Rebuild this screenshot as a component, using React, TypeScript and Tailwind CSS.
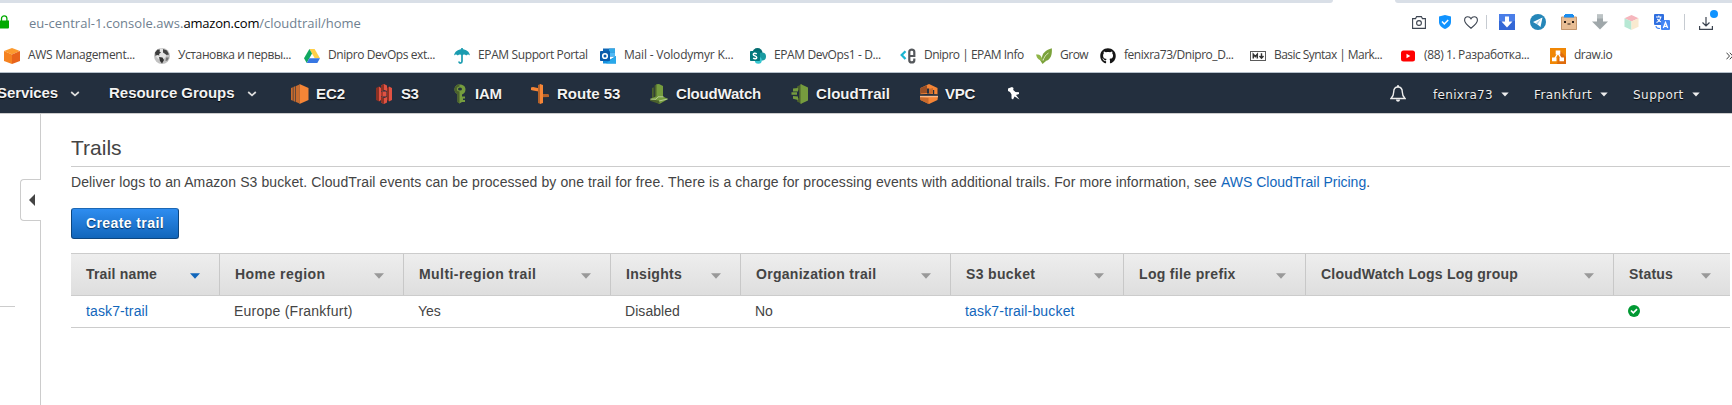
import type { ReactNode } from "react";
import { FaGithub } from "react-icons/fa";

const Svg = ({ children, className = "h-4 w-4" }: { children: ReactNode; className?: string }) => (
  <svg viewBox="0 0 16 16" className={className + " shrink-0"} fill="none">{children}</svg>
);

/* ---------- bookmark icons ---------- */
const AwsCube = () => (
  <Svg>
    <path d="M8 0l8 3-8 3.5L0 3z" fill="#fc9a2e" />
    <path d="M0 3l8 3.5V16l-8-3z" fill="#f58220" />
    <path d="M16 3L8 6.5V16l8-3z" fill="#e8641b" />
  </Svg>
);
const Globe = () => (
  <Svg>
    <circle cx="8" cy="8" r="8" fill="#c2c2c2" />
    <circle cx="7" cy="6" r="5.5" fill="#e4e4e4" />
    <path d="M1 4.500l2.500-3L6 1.500l-.5 2 1.500 1-2 1.500.5 1.500L3 7 1.500 8z" fill="#3c3c3c" />
    <path d="M9 1l4 1.500 2 4-2.500.5-2-1.500-1.500-1z" fill="#444" />
    <path d="M5 9l3.500.5 1.500 2.500L8 15.500 6 13z" fill="#333" />
    <path d="M12 9.500l3 0-1.500 3-2 .5z" fill="#777" />
  </Svg>
);
const Drive = () => (
  <Svg>
    <path d="M5.400 1h5.200L16 10.300h-5.300z" fill="#ffcf48" />
    <path d="M5.400 1L0 10.300 2.700 15 8 5.600z" fill="#11a861" />
    <path d="M5.300 10.300H16L13.300 15H2.700z" fill="#3777e3" />
  </Svg>
);
const Umbrella = () => (
  <Svg>
    <path d="M0 7.500C.5 3.500 4 1.200 8 1.200s7.500 2.300 8 6.300c-1.300-1.200-2.600-1.200-3.800 0-1.200-1.200-2.900-1.200-4.200 0-1.300-1.200-3-1.200-4.200 0C2.600 6.300 1.300 6.300 0 7.500z" fill="#1a9cb0" />
    <path d="M8 0v13.200c0 2.400-3 2.400-3 .2" stroke="#1a9cb0" strokeWidth="1.700" />
  </Svg>
);
const Outlook = () => (
  <Svg>
    <path d="M3 .5h12v8H3z" fill="#1066b5" />
    <path d="M9 .5h6v4H9z" fill="#32a9e7" />
    <path d="M9 4.500h6v4H9z" fill="#50b9f5" />
    <path d="M3 8l7 3.500L16 8v7.500H3z" fill="#1490df" />
    <path d="M16 8v7.500H6z" fill="#28a8ea" />
    <rect y="3" width="10" height="10" rx=".8" fill="#0a5cab" />
    <circle cx="5" cy="8" r="2.300" stroke="#fff" strokeWidth="1.600" />
  </Svg>
);
const SharePoint = () => (
  <Svg>
    <circle cx="7.500" cy="5" r="5" fill="#036c70" />
    <circle cx="12" cy="8.500" r="4" fill="#1a9ba1" />
    <circle cx="8.300" cy="12.300" r="3.500" fill="#37c6d0" />
    <rect y="3" width="10" height="10" rx=".8" fill="#03787c" />
    <path d="M6.800 5.800C5 4.800 3.300 5.200 3.300 6.500c0 1.600 3.400 1.200 3.400 2.900 0 1.500-2 1.800-3.600.8" stroke="#fff" strokeWidth="1.500" />
  </Svg>
);
const Epam = () => (
  <Svg>
    <path d="M5.500 3.200L1.700 7 5.500 11" stroke="#1bb5d1" strokeWidth="2.300" />
    <path d="M9.500 8h4.800V3.800c0-3-5-3-5 0v8.400c0 3 5 3 5 0v-1.700" stroke="#55585c" strokeWidth="2.200" />
  </Svg>
);
const Leaf = () => (
  <Svg>
    <path d="M15.800.3c.5 7-1.300 12.600-8.800 13C3.800 8 8.500 2.200 15.800.3z" fill="#7ba23b" />
    <path d="M0 6.500c4-.3 6 1.500 6.500 6.500C3 12.500.8 10.500 0 6.500z" fill="#8fb548" />
    <path d="M7 13c1-4 3-6.500 5.500-8" stroke="#d5e4b8" strokeWidth="1" />
    <path d="M4 12l2.500 4L10 13z" fill="#7ba23b" />
  </Svg>
);
const Markdown = () => (
  <Svg>
    <rect x=".5" y="3.500" width="15" height="9" fill="#fff" stroke="#5a5a5a" />
    <path d="M3.300 10.500V6.200L5.300 8.500l2-2.300v4.300" stroke="#333" strokeWidth="1.500" />
    <path d="M11.500 5.300v4.500M9.500 8l2 2.300 2-2.300" stroke="#333" strokeWidth="1.400" />
  </Svg>
);
const YouTube = () => (
  <Svg>
    <rect x="1" y="2.500" width="14" height="11" rx="2.500" fill="#f00" />
    <path d="M6.500 5.800v4.400L10.300 8z" fill="#fff" />
  </Svg>
);
const DrawIo = () => (
  <Svg>
    <rect width="16" height="16" fill="#f08705" />
    <path d="M10 3l6 6v7H7z" fill="#df6c0c" />
    <path d="M8 5L4.500 11M8 5l3.500 6" stroke="#fff" strokeWidth="1.400" />
    <path d="M5.700 2.500h4.600v4H5.700zM2 9.500h4.500v3.800H2zM9.500 9.500H14v3.800H9.500z" fill="#fff" />
  </Svg>
);

const bookmarks: { icon: ReactNode; text: string; w: string; t: string }[] = [
  { icon: <AwsCube />, text: "AWS Management...", w: "w-[150px]", t: "tracking-[-0.3px]" },
  { icon: <Globe />, text: "Установка и первы...", w: "w-[150px]", t: "tracking-[-0.4px]" },
  { icon: <Drive />, text: "Dnipro DevOps ext...", w: "w-[150px]", t: "tracking-[-0.42px]" },
  { icon: <Umbrella />, text: "EPAM Support Portal", w: "w-[146px]", t: "tracking-[-0.38px]" },
  { icon: <Outlook />, text: "Mail - Volodymyr K...", w: "w-[150px]", t: "tracking-[-0.19px]" },
  { icon: <SharePoint />, text: "EPAM DevOps1 - D...", w: "w-[150px]", t: "tracking-[-0.4px]" },
  { icon: <Epam />, text: "Dnipro | EPAM Info", w: "w-[136px]", t: "tracking-[-0.5px]" },
  { icon: <Leaf />, text: "Grow", w: "w-[64px]", t: "tracking-[-0.5px]" },
  { icon: <FaGithub className="h-4 w-4 shrink-0 text-[#161616]" />, text: "fenixra73/Dnipro_D...", w: "w-[150px]", t: "tracking-[-0.46px]" },
  { icon: <Markdown />, text: "Basic Syntax | Mark...", w: "w-[150px]", t: "tracking-[-0.55px]" },
  { icon: <YouTube />, text: "(88) 1. Разработка...", w: "w-[150px]", t: "tracking-[-0.37px]" },
  { icon: <DrawIo />, text: "draw.io", w: "w-[150px]", t: "tracking-[-0.5px]" },
];

/* ---------- service icons ---------- */
const Service = ({ children }: { children: ReactNode }) => (
  <svg viewBox="0 0 18 20" className="h-5 w-[18px] shrink-0">{children}</svg>
);
const Ec2 = () => (
  <Service>
    <path d="M0 4l1.800-.8v13.600L0 16zM2.400 3l2-1v16l-2-1zM5 2L8.500.5v19L5 18z" fill="#c96c2e" />
    <path d="M8.500 0L17.500 4v12l-9 4z" fill="#f58536" />
  </Service>
);
const S3 = () => (
  <Service>
    <path d="M1 4l3-1.500v15L1 16z" fill="#8c3123" />
    <path d="M4 2.500L6 4v12l-2 1.500z" fill="#e05243" />
    <path d="M17 4l-3-1.500v15l3-1.500z" fill="#e05243" />
    <path d="M14 2.500L12 4v12l2 1.500z" fill="#8c3123" />
    <path d="M9 0l3 1.500V7L9 6 6 7V1.500zM9 20l3-1.500V13l-3 1-3-1v5.500z" fill="#e05243" />
    <path d="M9 0L6 1.500V7l3-1zM9 20l-3-1.500V13l3 1z" fill="#8c3123" />
    <path d="M6.500 7.500h5v5h-5z" fill="#e05243" />
    <path d="M6 8h2v4H6z" fill="#a83a2c" />
  </Service>
);
const Iam = () => (
  <Service>
    <path d="M8.500.5C13 .5 14.500 3 14.500 5.500S13 10 11 10.500v2h3v2h-2v1.500h2v2h-3L8.500 19.500 6.500 18v-8C4.500 9 3.500 7.500 3.500 5.500c0-3 2-5 5-5z" fill="#759c3e" />
    <path d="M8.500.5c-3 0-5 2-5 5 0 2 1 3.500 3 4.500v8l2 1.500z" fill="#4b612c" />
    <ellipse cx="9" cy="5" rx="3.200" ry="2.500" fill="#759c3e" />
    <ellipse cx="9" cy="5" rx="2" ry="1.500" fill="#232f3e" />
  </Service>
);
const Route53 = () => (
  <Service>
    <path d="M0 3.500L2 3l7 1.500v3.300L2 6.500 0 6z" fill="#f58536" />
    <path d="M10 10h7l1 .8v2.200l-8 .3z" fill="#b5622a" />
    <path d="M7 1l2.500-1v20L7 19z" fill="#b5622a" />
    <path d="M9 0l3 1v18l-3 1z" fill="#f58536" />
  </Service>
);
const CloudWatch = () => (
  <Service>
    <path d="M2 4l1.800-.8V14L2 15zM4.600 1.500L7 0v13l-2.400 1z" fill="#4b612c" />
    <path d="M6.500.3L9 0l4 2v11H6.500z" fill="#759c3e" />
    <path d="M0 15l6-2.500h7l5 2.500-8.500 5z" fill="#759c3e" />
    <path d="M0 15l9.500 1.800V20L0 16.800z" fill="#4b612c" />
    <path d="M.5 15.200h5.500l2-2.400h5.500M9 17l8.500-2" stroke="#c5d7a8" strokeWidth=".8" fill="none" />
  </Service>
);
const CloudTrail = () => (
  <Service>
    <path d="M6 2.500l5-2.500v20l-5-2.500v-3l2-.5V6.500L6 6z" fill="#4b612c" />
    <path d="M9.500 0l7.500 3.500v13L9.500 20z" fill="#759c3e" />
    <path d="M2 4.500L7 4v3.500H2zM.5 8.300H6v2.400H.5zM2 12l5 .5V16l-5-1.200z" fill="#759c3e" />
  </Service>
);
const Vpc = () => (
  <Service>
    <path d="M9 0l8.500 4v6.500H.5V4z" fill="#f58536" />
    <path d="M.5 4L7 1.200V9L.5 9.500z" fill="#9d5025" />
    <path d="M7 4.500h2.200V9.500H7zM13 6h1.200v4H13z" fill="#232f3e" />
    <path d="M9.200 5L13 4v5.500H9.200z" fill="#c86a2d" />
    <path d="M.5 10.500L9 9.700l8.500.8v1.200H.5z" fill="#232f3e" />
    <path d="M0 12h18l-.5 4L9 20 .5 16z" fill="#f58536" />
    <path d="M.5 13l8 1v6L.5 16z" fill="#c86a2d" />
    <path d="M0 11.800h18v1.400H0z" fill="#f7b98c" />
  </Service>
);

const shadow = "[text-shadow:0_1px_1px_#000]";
const services: { icon: ReactNode; text: string; w: string; t: string; gap: string }[] = [
  { icon: <Ec2 />, text: "EC2", w: "w-[84px]", t: "tracking-normal", gap: "gap-[7px]" },
  { icon: <S3 />, text: "S3", w: "w-[76px]", t: "tracking-[-0.5px]", gap: "gap-2" },
  { icon: <Iam />, text: "IAM", w: "w-[80px]", t: "tracking-[-0.2px]", gap: "gap-[6px]" },
  { icon: <Route53 />, text: "Route 53", w: "w-[119px]", t: "tracking-normal", gap: "gap-2" },
  { icon: <CloudWatch />, text: "CloudWatch", w: "w-[141px]", t: "tracking-[-0.19px]", gap: "gap-2" },
  { icon: <CloudTrail />, text: "CloudTrail", w: "w-[129px]", t: "tracking-[0.07px]", gap: "gap-[7px]" },
  { icon: <Vpc />, text: "VPC", w: "w-[87px]", t: "tracking-[-0.25px]", gap: "gap-[7px]" },
];

const Chevron = () => (
  <svg viewBox="0 0 10 6" className="mt-[2px] h-[6px] w-[10px] shrink-0"><path d="M1.200 1l3.800 3.400L8.800 1" stroke="#ddd" strokeWidth="1.700" fill="none" /></svg>
);
const Caret = () => (
  <svg viewBox="0 0 8 5" className="h-[5px] w-2 shrink-0"><path d="M.3.500h7.400L4 4.500z" fill="#eee" /></svg>
);

/* ---------- table ---------- */
const columns: { name: string; w: string; t: string; active?: boolean }[] = [
  { name: "Trail name", w: "w-[149px] pl-[15px]", t: "tracking-[0.17px]", active: true },
  { name: "Home region", w: "w-[184px] pl-[15px]", t: "tracking-[0.45px]" },
  { name: "Multi-region trail", w: "w-[207px] pl-[15px]", t: "tracking-[0.43px]" },
  { name: "Insights", w: "w-[130px] pl-[15px]", t: "tracking-[0.3px]" },
  { name: "Organization trail", w: "w-[210px] pl-[15px]", t: "tracking-[0.29px]" },
  { name: "S3 bucket", w: "w-[173px] pl-[15px]", t: "tracking-[0.35px]" },
  { name: "Log file prefix", w: "w-[182px] pl-[15px]", t: "tracking-[0.33px]" },
  { name: "CloudWatch Logs Log group", w: "w-[308px] pl-[15px]", t: "tracking-[0.22px]" },
  { name: "Status", w: "w-[116px] pl-[15px]", t: "tracking-[0.2px]" },
];
const cells: { node: ReactNode; w: string }[] = [
  { node: <span className="tracking-[0.12px] text-[#1166bb]">task7-trail</span>, w: "w-[148px]" },
  { node: <span className="tracking-[0.24px]">Europe (Frankfurt)</span>, w: "w-[184px]" },
  { node: "Yes", w: "w-[207px]" },
  { node: <span className="tracking-[0.06px]">Disabled</span>, w: "w-[130px]" },
  { node: "No", w: "w-[210px]" },
  { node: <span className="tracking-[0.17px] text-[#1166bb]">task7-trail-bucket</span>, w: "w-[663px]" },
  {
    node: (
      <svg viewBox="0 0 12 12" className="mt-px h-3 w-3">
        <circle cx="6" cy="6" r="6" fill="#093" />
        <path d="M3 5.500l2.300 2.400L9 4.200" stroke="#fff" strokeWidth="1.700" fill="none" />
      </svg>
    ),
    w: "w-[100px]",
  },
];

export default function App() {
  return (
    <div className="h-[405px] w-[1732px] overflow-hidden bg-white font-['Liberation_Sans',sans-serif] text-[#444]">
      {/* tab strip edge */}
      <div className="flex h-[3px] justify-between">
        <div className="w-[1333px] rounded-br-[3px] bg-[#d9dfe7]" />
        <div className="w-[337px] rounded-bl-[3px] bg-[#d9dfe7]" />
      </div>

      {/* address bar */}
      <div className="flex h-[36px] items-center">
        <svg viewBox="0 0 10 14" className="mt-px h-[14px] w-[10px] shrink-0">
          <path d="M1.500 6V3.500a2.700 2.700 0 015.400 0V6" stroke="#0a0" strokeWidth="1.300" fill="none" />
          <path d="M0 5.500h9v7a1 1 0 01-1 1H0z" fill="#0a0" />
        </svg>
        <div className="ml-[19px] mt-[4px] w-[1383px] whitespace-nowrap font-['Open_Sans',sans-serif] text-[13px] leading-5 text-[#6f7f90]">
          <span className="tracking-[0.04px]">eu-central-1.console.aws.</span>
          <span className="tracking-[-0.2px] text-black">amazon.com</span>
          <span>/cloudtrail/home</span>
        </div>
        <div className="flex items-center pt-[2px]">
          <svg viewBox="0 0 14 13" className="mr-[13px] h-[13px] w-[14px]" fill="none" stroke="#3c4450" strokeWidth="1.100">
            <path d="M.6 2.600h3L4.600.6h4.800l1 2h3v9.800H.6z" />
            <circle cx="7" cy="7" r="2.400" />
          </svg>
          <svg viewBox="0 0 12 14" className="mr-[13px] h-[14px] w-3" fill="none">
            <path d="M6 0l6 1.500V7c0 3.500-2.500 5.500-6 7-3.500-1.500-6-3.500-6-7V1.500z" fill="#1093ff" />
            <path d="M3 6.500L5.300 9 9.200 5" stroke="#fff" strokeWidth="1.500" />
          </svg>
          <svg viewBox="0 0 14 13" className="h-[13px] w-[14px]" fill="none" stroke="#3c4450" strokeWidth="1.100">
            <path d="M7 12.200C3 9 .6 6.800.6 4.200.6 2 2 .7 3.800.7 5.200.7 6.400 1.500 7 2.800 7.600 1.500 8.800.7 10.200.7c1.800 0 3.200 1.300 3.200 3.500 0 2.600-2.400 4.800-6.400 8z" />
          </svg>
          <div className="ml-2 mr-3 h-[14px] w-px bg-[#c6cbd1]" />
          <Svg className="mr-[15px] h-4 w-4">
            <rect width="16" height="16" fill="#3367d6" />
            <path d="M0 0h16v7H0z" fill="#4a7ee8" />
            <path d="M6 2.500h4v5h3.500L8 13.500 2.500 7.500H6z" fill="#fff" />
          </Svg>
          <Svg className="mr-[15px] h-4 w-4">
            <circle cx="8" cy="8" r="8" fill="#2586b8" />
            <path d="M3 8l9.500-4.500L10.500 13 7.500 10.500z" fill="#fff" />
            <path d="M6 9l5-4-3.500 5.500z" fill="#a9d2e8" />
          </Svg>
          <Svg className="mr-[15px] h-4 w-4">
            <rect y="3" width="16" height="13" rx="1" fill="#e8bd94" />
            <path d="M.5 3h15M.5 3v12.500h15V3" stroke="#c4966d" />
            <path d="M4 0h8v1h1v2.500H3V1h1z" fill="#1a8df0" />
            <path d="M3 7h2v2H3zM11 7h2v2h-2zM6.500 9.500h3v1h-3z" fill="#2c2018" />
          </Svg>
          <Svg className="mr-4 h-4 w-4">
            <path d="M5 .5h6v7h5L8 15.500 0 7.500h5z" fill="#9fa7aa" />
            <path d="M5 .5h6v4H5z" fill="#bcc3c5" />
          </Svg>
          <Svg className="mr-[15px] h-[15px] w-[15px]">
            <path d="M8 0l7.500 3.500L8 7 .5 3.500z" fill="#f6b6bd" />
            <path d="M.5 3.500L8 7v9L.5 12.500z" fill="#b8e8d4" />
            <path d="M15.500 3.500L8 7v9l7.500-3.500z" fill="#f9ead0" />
          </Svg>
          <Svg className="mr-[14px] h-4 w-4">
            <rect width="10" height="11" rx="1" fill="#2f6fe0" />
            <path d="M2 3h5.500M4.800 1.500V3M2.500 8.500c2.500-1 3.800-3 4.200-5.500M3.300 5l3.400 3" stroke="#fff" strokeWidth="1.100" />
            <rect x="7" y="6" width="9" height="10" rx="1" fill="#4285f4" />
            <path d="M9.300 14l2.200-5.500 2.200 5.500M10 12.300h3" stroke="#fff" strokeWidth="1.300" />
            <path d="M2 12c0 2 1.500 2.500 4 2.500" stroke="#4285f4" strokeWidth="1.200" />
          </Svg>
          <div className="mr-[14px] h-4 w-px bg-[#c6cbd1]" />
          <div className="relative">
            <svg viewBox="0 0 14 13" className="mt-[2px] h-[13px] w-[14px]" fill="none" stroke="#3c4450" strokeWidth="1.200">
              <path d="M7 0v8.500M3.500 5.500L7 9l3.500-3.500M.6 9v3.400h12.800V9" />
            </svg>
            <div className="absolute -right-[5px] -top-[5px] h-2 w-2 rounded-full bg-[#1093ff]" />
          </div>
        </div>
      </div>

      {/* bookmarks */}
      <div className="flex h-[33px] items-center pl-1 font-['Open_Sans',sans-serif] text-[12px] leading-4 text-[#444]">
        {bookmarks.map((b) => (
          <div key={b.text} className={"flex shrink-0 items-center gap-2 " + b.w}>
            {b.icon}
            <span className={"-mt-px whitespace-nowrap " + b.t}>{b.text}</span>
          </div>
        ))}
        <svg viewBox="0 0 7 8" className="ml-[26px] h-2 w-[7px] shrink-0" fill="none" stroke="#444">
          <path d="M.5.700L3.500 4 .5 7.300M3.800.700L6.800 4l-3 3.300" />
        </svg>
      </div>

      {/* console navigation */}
      <div className="flex h-[42px] items-center border-b border-t border-b-[#ccc] border-t-[#b5c0ca] bg-[#232f3e] text-[15px] font-bold leading-5 text-[#f2f2f2]">
        <div className="-ml-[3px] flex w-[112px] shrink-0 items-center gap-3">
          <span className={"tracking-[-0.09px] " + shadow}>Services</span>
          <Chevron />
        </div>
        <div className="flex w-[182px] shrink-0 items-center gap-3">
          <span className={"whitespace-nowrap tracking-[-0.02px] " + shadow}>Resource Groups</span>
          <Chevron />
        </div>
        {services.map((s) => (
          <div key={s.text} className={"flex shrink-0 items-center pt-px " + s.gap + " " + s.w}>
            {s.icon}
            <span className={"whitespace-nowrap pt-px " + s.t + " " + shadow}>{s.text}</span>
          </div>
        ))}
        <svg viewBox="0 0 13 13" className="mr-[370px] h-[13px] w-[13px] shrink-0">
          <path d="M1 1.500L5 0l1.500 1-.3 2 2.300 2 3.500.3L12 7 9 8l3.500 4.500L7.500 9.500 6 12.500 4.500 11.500V7.500L3 5 1 4z" fill="#fff" />
        </svg>
        <svg viewBox="0 0 16 17" className="mr-[27px] h-[17px] w-4 shrink-0" fill="none">
          <path d="M8 2c-3 0-4.300 2.300-4.300 5 0 3.500-1.200 5-2.700 6.500h14c-1.500-1.500-2.700-3-2.700-6.500 0-2.700-1.300-5-4.300-5z" stroke="#eee" strokeWidth="1.400" />
          <path d="M7 .3h2V2H7zM6 14.500h4c0 3-4 3-4 0z" fill="#eee" />
        </svg>
        <div className="flex items-center pt-[3px] font-['DejaVu_Sans',sans-serif] text-[12px] font-normal text-[#eee]">
          <div className="flex w-[101px] items-center gap-2"><span className={"tracking-[0.31px] " + shadow}>fenixra73</span><Caret /></div>
          <div className="flex w-[99px] items-center gap-2"><span className={"tracking-[0.42px] " + shadow}>Frankfurt</span><Caret /></div>
          <div className="flex items-center gap-2"><span className={"tracking-[0.48px] " + shadow}>Support</span><Caret /></div>
        </div>
      </div>

      <div className="flex h-[291px]">
        {/* collapsed side panel */}
        <div className="relative w-[41px] shrink-0 border-r border-[#ccc]">
          <div className="mt-[192px] h-px w-[15px] bg-[#ccc]" />
          <div className="absolute -right-px top-[65px] flex h-[42px] w-[21px] items-center rounded-l-[4px] border border-r-0 border-[#ccc] bg-white pl-2">
            <svg viewBox="0 0 6 12" className="h-3 w-[6px]"><path d="M6 0v12L0 6z" fill="#444" /></svg>
          </div>
        </div>

        <div className="w-[1690px] shrink-0 pl-[30px]">
          <div className="w-[1659px]">
            <h1 className="flex h-[53px] items-end border-b border-[#ccc] pb-[5px] text-[21px] leading-[26px]">Trails</h1>
            <p className="mt-[6px] whitespace-nowrap text-[14px] leading-[18px]">
              <span className="tracking-[0.1px]">Deliver logs to an Amazon S3 bucket. CloudTrail events can be processed by one trail for free. There is a charge for processing events with additional trails. For more information, see </span>
              <span className="text-[#1166bb]">AWS CloudTrail Pricing</span>.
            </p>
            <button className="mt-[17px] flex h-[31px] w-[108px] items-center justify-center rounded-[3px] border border-[#0d4680] border-t-[#1c68b5] bg-gradient-to-b from-[#2e8df0] to-[#1166bb] text-[14px] font-bold tracking-[0.4px] text-white [text-shadow:0_1px_1px_#00305f]">
              Create trail
            </button>

            <div className="mt-[14px] flex h-[43px] border-b border-t border-[#ccc] bg-gradient-to-b from-[#eee] to-[#dedede] text-[14px] font-bold leading-5">
              {columns.map((c, i) => (
                <div key={c.name} className={"flex shrink-0 items-center justify-between pb-px " + c.w + (i < 8 ? " border-r border-[#c8c8c8]" : "")}>
                  <span className={"whitespace-nowrap " + c.t}>{c.name}</span>
                  <svg viewBox="0 0 10 6" className="mr-[19px] mt-[4px] h-[6px] w-[10px]">
                    <path d="M0 .3h10L5 5.700z" fill={c.active ? "#1166bb" : "#999"} />
                  </svg>
                </div>
              ))}
            </div>
            <div className="flex h-[32px] items-center border-b border-[#ccc] pb-[2px] pl-[15px] text-[14px] leading-5">
              {cells.map((c, i) => (
                <div key={i} className={"shrink-0 whitespace-nowrap " + c.w}>{c.node}</div>
              ))}
            </div>
          </div>
        </div>
      </div>
    </div>
  );
}
